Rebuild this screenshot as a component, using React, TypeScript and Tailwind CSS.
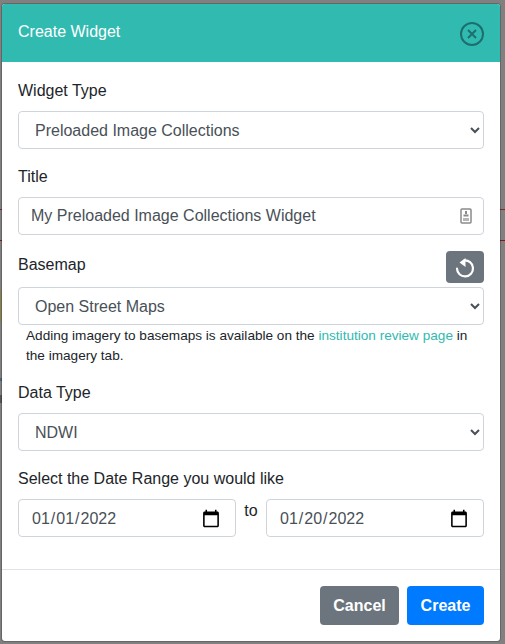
const SELECT = "h-[38px] w-full rounded-[4px] border border-[#ced4da] bg-white px-3 text-[16px] text-[#495057] outline-none";
const INPUT = "h-[38px] rounded-[4px] border border-[#ced4da] bg-white px-3 text-[16px] text-[#495057] outline-none";
const DATE = INPUT + " w-[218px] pt-[2px] [&::-webkit-calendar-picker-indicator]:m-0 [&::-webkit-calendar-picker-indicator]:mr-[2px] [&::-webkit-calendar-picker-indicator]:h-[20px] [&::-webkit-calendar-picker-indicator]:w-[20px] [&::-webkit-calendar-picker-indicator]:p-0";

export default function App() {
  return (
    <div className="relative h-[644px] w-[505px] overflow-hidden bg-[#808080] font-['Liberation_Sans',Arial,sans-serif] text-[16px] leading-[24px] text-[#212529]">
      <div className="absolute left-0 top-[209px] h-px w-full bg-[#7a2a2a]" />
      <div className="absolute left-0 top-[240px] h-px w-full bg-[#8a1515]" />
      <div className="absolute left-0 top-[290px] h-[32px] w-[2px] bg-[#85805a]" />
      <div className="absolute left-0 top-[378px] h-[3px] w-[2px] bg-[#4a6478]" />
      <div className="absolute left-0 top-[395px] h-[8px] w-[2px] bg-[#555555]" />
      <div className="absolute left-[1px] top-[3px] flex h-[639px] w-[500px] flex-col overflow-hidden rounded-[4px] border border-black/20 bg-white bg-clip-padding">
        <div className="flex h-[58px] shrink-0 items-start justify-between bg-[#31bab0] pl-[16px] pr-[15px] pt-[16px] text-white">
          <span className="text-[16px] leading-[24px]">Create Widget</span>
          <svg width="26" height="26" viewBox="0 0 26 26" fill="none" stroke="#1c6f6e" className="mt-[1px]">
            <circle cx="13" cy="13" r="11" strokeWidth="2" />
            <path d="M9 9l8 8M17 9l-8 8" strokeWidth="2" />
          </svg>
        </div>
        <div className="flex flex-col px-4 pt-[17px]">
          <label className="mb-2 block h-6">Widget Type</label>
          <select className={SELECT} defaultValue="a">
            <option value="a">Preloaded Image Collections</option>
          </select>
          <label className="mb-2 mt-4 block h-6">Title</label>
          <div className="relative">
            <input className={INPUT + " w-full"} defaultValue="My Preloaded Image Collections Widget" />
            <svg width="12" height="16" viewBox="0 0 12 16" className="absolute right-[12px] top-[11px]" fill="none">
              <rect x="1" y="1" width="10" height="14" rx="1" stroke="#8a8a8a" strokeWidth="1.5" />
              <rect x="5" y="3" width="2" height="3" fill="#8a8a8a" />
              <rect x="3.5" y="6.5" width="5" height="2" fill="#8a8a8a" />
              <rect x="3" y="10" width="6" height="3" fill="#b5b5b5" />
            </svg>
          </div>
          <div className="mt-4 flex h-[36px] items-start justify-between">
            <label className="mt-[2px] block h-6">Basemap</label>
            <button className="h-8 w-[38px] rounded-[4px] bg-[#6c757d]">
              <svg width="38" height="32" viewBox="0 0 38 32" fill="none" className="block">
                <path d="M11 17.5A8 8 0 1 0 18 9.5" stroke="#fff" strokeWidth="2.2" strokeLinecap="round" />
                <path d="M19.5 7V16L13.5 11.5z" fill="#fff" />
              </svg>
            </button>
          </div>
          <select className={SELECT} defaultValue="a">
            <option value="a">Open Street Maps</option>
          </select>
          <p className="mb-0 ml-2 mt-[1px] text-[13.6px] leading-[20.4px]">
            Adding imagery to basemaps is available on the <span className="text-[#31bab0]">institution review page</span> in the imagery tab.
          </p>
          <label className="mb-2 mt-[14px] block h-6">Data Type</label>
          <select className={SELECT + " pt-[2px]"} defaultValue="a">
            <option value="a">NDWI</option>
          </select>
          <label className="mb-2 mt-4 block h-6">Select the Date Range you would like</label>
          <div className="flex items-start">
            <input type="date" className={DATE} defaultValue="2022-01-01" />
            <span className="mx-2 block w-[14px] text-center">to</span>
            <input type="date" className={DATE} defaultValue="2022-01-20" />
          </div>
        </div>
        <div className="mt-auto flex h-[72px] items-center justify-end gap-2 border-t border-[#dee2e6] px-4">
          <button className="h-[39px] w-[79px] rounded-[4px] bg-[#6c757d] font-bold text-white">Cancel</button>
          <button className="h-[39px] w-[77px] rounded-[4px] bg-[#007bff] font-bold text-white">Create</button>
        </div>
      </div>
    </div>
  );
}
